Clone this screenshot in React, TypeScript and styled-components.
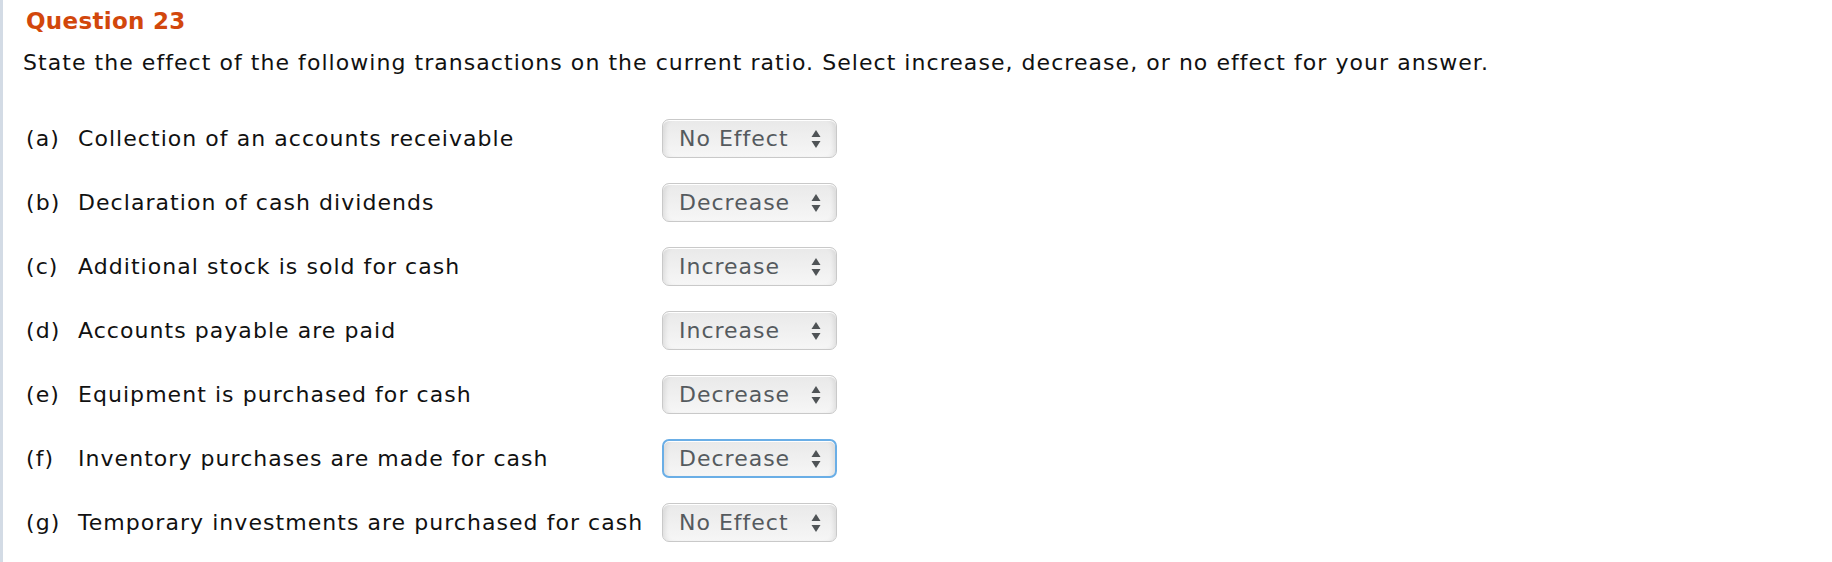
import React from 'react';
import styled, { createGlobalStyle } from 'styled-components';

const GlobalStyle = createGlobalStyle`
  html, body {
    margin: 0;
    padding: 0;
    background: #ffffff;
  }
  body {
    font-family: "DejaVu Sans", Verdana, sans-serif;
    color: #111;
  }
`;

const Page = styled.div`
  min-height: 562px;
  box-sizing: border-box;
  border-left: 3px solid #d3dbe5;
  padding: 7px 0 0 20px;
`;

const Heading = styled.h2`
  margin: 0;
  font-size: 23px;
  line-height: 28px;
  letter-spacing: 0.3px;
  font-weight: 700;
  color: #d2470c;
  padding-left: 3px;
`;

const Prompt = styled.p`
  margin: 15px 0 0;
  font-size: 22px;
  line-height: 26px;
  letter-spacing: 1.05px;
  color: #111;
`;

const ItemList = styled.div`
  margin-top: 30px;
  display: flex;
  flex-direction: column;
`;

const Row = styled.div`
  display: grid;
  grid-template-columns: 52px 584px 175px;
  align-items: center;
  height: 64px;
  font-size: 22px;
  letter-spacing: 1.05px;
  padding-left: 3px;
`;

const Letter = styled.span`
  color: #111;
`;

const Label = styled.span`
  color: #111;
  white-space: nowrap;
`;

const SelectWrap = styled.div`
  position: relative;
  width: 175px;
  height: 39px;
`;

const Select = styled.select<{ $focused?: boolean }>`
  appearance: none;
  -webkit-appearance: none;
  width: 100%;
  height: 100%;
  box-sizing: border-box;
  margin: 0;
  padding: 0 0 0 ${(p) => (p.$focused ? '15px' : '16px')};
  font-family: "DejaVu Sans", Verdana, sans-serif;
  font-size: 22px;
  letter-spacing: 1px;
  color: #555a5e;
  border: ${(p) => (p.$focused ? '2px solid #6aaee6' : '1px solid #c9c9c9')};
  border-radius: 7px;
  background: linear-gradient(to bottom, #e9e9e9 0%, #efefef 45%, #f6f6f6 100%);
  box-shadow: inset 0 1px 0 #ffffff, inset 5px 0 5px -3px rgba(0, 0, 0, 0.09),
    inset -5px 0 5px -3px rgba(0, 0, 0, 0.09);
  outline: none;
  cursor: pointer;
`;

const Arrows = styled.svg`
  position: absolute;
  right: 16px;
  top: 11px;
  width: 10px;
  height: 18px;
  pointer-events: none;
`;

const options = ['Increase', 'Decrease', 'No Effect'];

const items = [
  { letter: 'a', text: 'Collection of an accounts receivable', value: 'No Effect' },
  { letter: 'b', text: 'Declaration of cash dividends', value: 'Decrease' },
  { letter: 'c', text: 'Additional stock is sold for cash', value: 'Increase' },
  { letter: 'd', text: 'Accounts payable are paid', value: 'Increase' },
  { letter: 'e', text: 'Equipment is purchased for cash', value: 'Decrease' },
  { letter: 'f', text: 'Inventory purchases are made for cash', value: 'Decrease', focused: true },
  { letter: 'g', text: 'Temporary investments are purchased for cash', value: 'No Effect' },
];

const App = () => {
  return (
    <>
      <GlobalStyle />
      <Page>
        <Heading>Question 23</Heading>
        <Prompt>
          State the effect of the following transactions on the current ratio. Select increase,
          decrease, or no effect for your answer.
        </Prompt>
        <ItemList>
          {items.map((item) => (
            <Row key={item.letter}>
              <Letter>({item.letter})</Letter>
              <Label>{item.text}</Label>
              <SelectWrap>
                <Select $focused={item.focused} defaultValue={item.value}>
                  {options.map((o) => (
                    <option key={o} value={o}>
                      {o}
                    </option>
                  ))}
                </Select>
                <Arrows viewBox="0 0 10 18">
                  <path d="M5 0 L9.5 7 L0.5 7 Z" fill="#4f5356" />
                  <path d="M0.5 11 L9.5 11 L5 18 Z" fill="#4f5356" />
                </Arrows>
              </SelectWrap>
            </Row>
          ))}
        </ItemList>
      </Page>
    </>
  );
};

export default App;
